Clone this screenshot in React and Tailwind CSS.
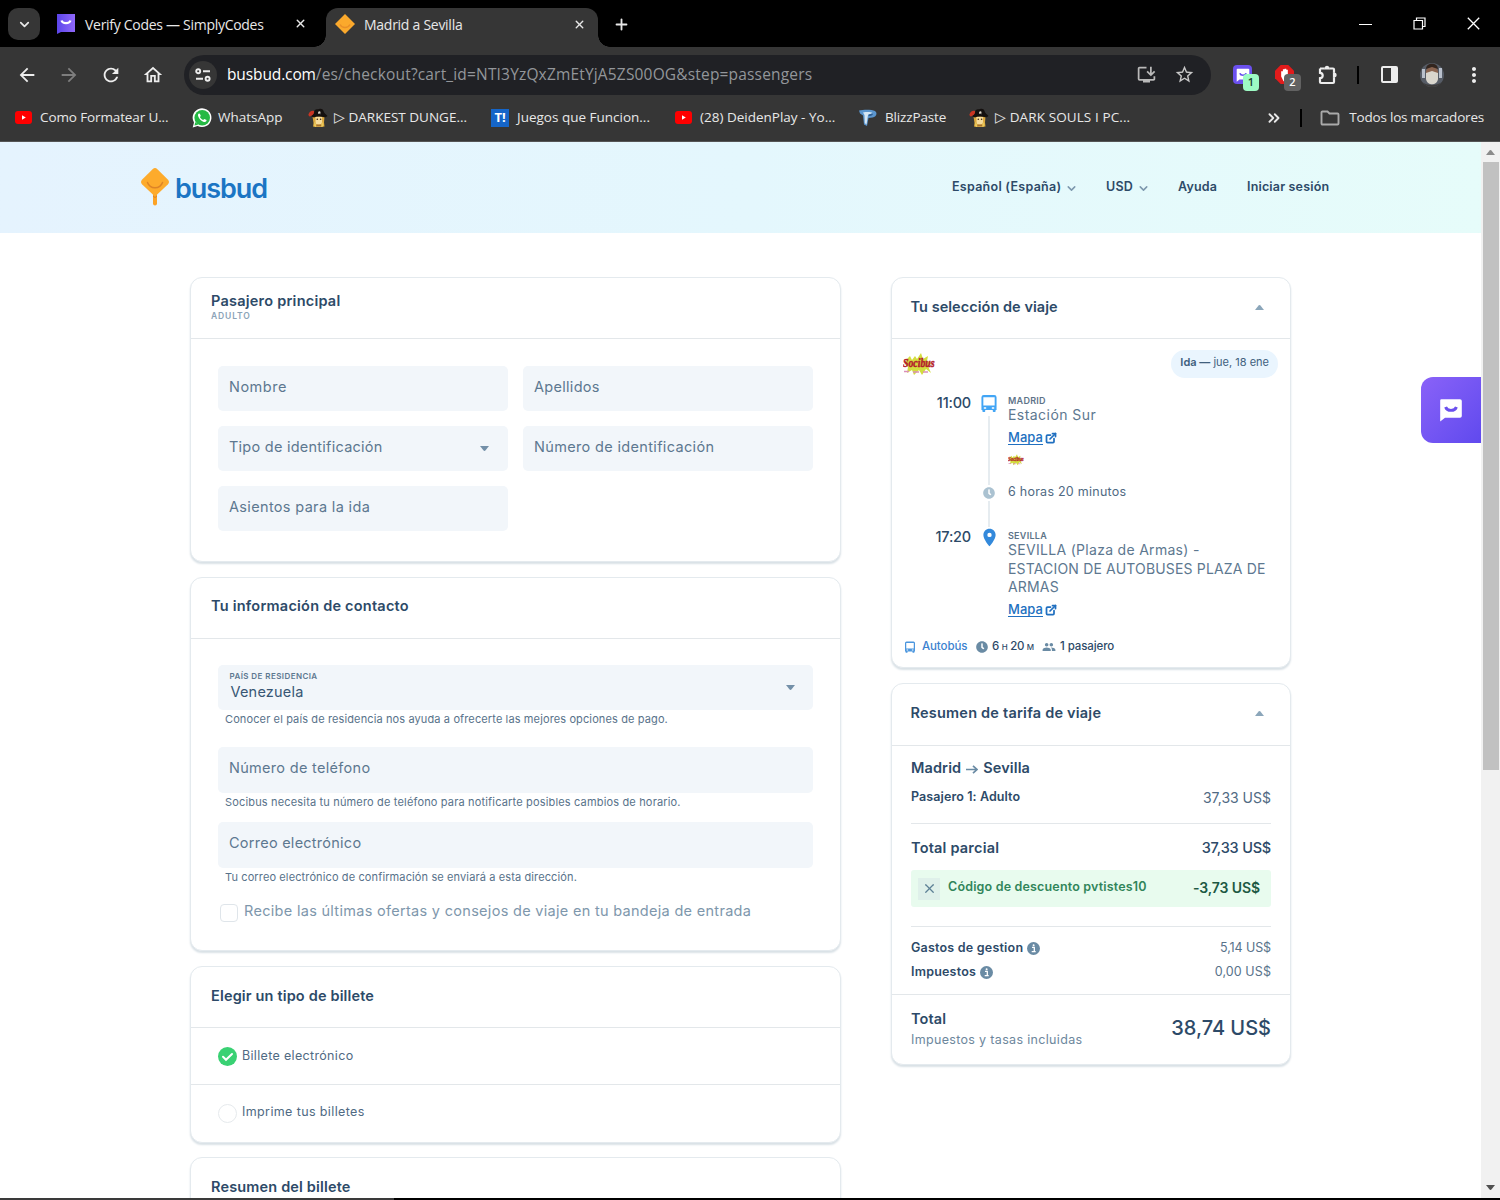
import React from 'react'
import {
  MdArrowBack,
  MdArrowForward,
  MdRefresh,
  MdOutlineHome,
  MdOutlineInstallDesktop,
  MdStarBorder,
  MdMoreVert,
  MdPeople,
  MdLocationOn,
} from 'react-icons/md'
import { FaClock } from 'react-icons/fa'
import { ChevronDown, ChevronsRight, ExternalLink, Plus, X } from 'lucide-react'

const CodesLogo = ({ className, bubble, smile }) => (
  <svg viewBox="0 0 20 20" className={className}>
    <path d="M2 1h15.500a1.500 1.500 0 0 1 1.500 1.500v12.500a1.500 1.500 0 0 1-1.500 1.500H5L1 19.500V2a1 1 0 0 1 1-1z" fill={bubble} />
    <path d="M5.500 7.500c1.200 3.800 7.800 3.800 9 0" fill="none" stroke={smile} strokeWidth="2.400" />
  </svg>
)

const YouTubeIcon = () => (
  <svg viewBox="0 0 17 13" className="h-[13px] w-[17px]">
    <rect width="17" height="13" rx="3" fill="#f00" />
    <path d="M7 4.200v4.600l3.800-2.300z" fill="#fff" />
  </svg>
)

const WhatsAppIcon = () => (
  <svg viewBox="0 0 20 20" className="size-5">
    <path d="M.7 19.500l1.300-4.900A9.400 9.400 0 1 1 5.600 18z" fill="#fff" />
    <circle cx="10.200" cy="9.800" r="7.800" fill="#25b944" />
    <path d="M2.400 17.600l1-3.600 2.800 2.700z" fill="#25b944" />
    <path d="M6.900 5.600c-.8.500-1.100 1.500-.8 2.500.9 2.800 3 4.900 5.700 5.900 1.200.4 2.400-.2 2.700-1.400l.1-.6-2.300-1.100-1.100 1.200c-1.500-.6-2.600-1.700-3.300-3.100l.9-1.100-.9-2.200z" fill="#fff" />
  </svg>
)

const PirateIcon = () => (
  <svg viewBox="0 0 20 20" className="size-5">
    <path d="M4.500 8.500h12l-.5 6 .5 4-3 .5H7l-2-.5.500-3.500z" fill="#dba73c" />
    <path d="M7.500 9h6.500v4.500a3.200 3.200 0 0 1-6.500 0z" fill="#f6dc9c" />
    <path d="M6.500 13.500l1.500 3 2.500.8 3-.8 1.500-3 .5 4-1.500 1.500H7.500L6 17.500z" fill="#e9c95c" />
    <path d="M8 18.500l.5-2h4.500l.5 2z" fill="#a8702a" />
    <path d="M3.500 8.500C4.500 6 6 5 6.500 2.500 8 .5 9.500 1.500 11 1c2-.8 4 0 4.500 2 .5 2.500 2.500 3 4 5-1.500 1.500-3 1.500-4.500 1C12 8 9 8 6 9.500z" fill="#14100f" />
    <path d="M.5 6.500C1 3.500 4 2 6 3c.5 1.500-.5 3-1.500 4L2 8.500.8 8z" fill="#c93523" />
    <path d="M10 4.200l2.600 1.600M12.600 4.200L10 5.800" stroke="#d8d4c8" strokeWidth=".7" />
    <circle cx="11.300" cy="4.200" r="1" fill="#d8d4c8" />
    <circle cx="9.300" cy="11.300" r=".8" fill="#3a2512" />
    <circle cx="12.600" cy="11.300" r=".8" fill="#3a2512" />
  </svg>
)

const JuegosIcon = () => (
  <span className="flex size-[18px] items-center justify-center bg-[#1565c8] text-[13px] font-bold text-white">T!</span>
)

const BlizzIcon = () => (
  <svg viewBox="0 0 18 18" className="size-[18px]">
    <path d="M0 1.500C5 .5 13 .5 16 2c3 2.500 1 6-2.500 6.500L9.500 9 8 17l-3-1.500L4 6.500 1 4.500z" fill="#5b96cf" />
    <path d="M4 3.500c4-.8 8-.5 9.500.4L9 6 7.500 15.500 5.800 14 5.500 6z" fill="#d5e7f5" />
    <path d="M9.500 5.500l4-1c1 1-.3 2.400-3.800 2.500z" fill="#2f5f93" />
  </svg>
)

const PuzzleIcon = () => (
  <svg viewBox="0 0 20 20" className="ml-6 size-5">
    <path d="M2 3.500h4.700M11.300 3.500H15a1 1 0 0 1 1 1v3.200M16 12.300v4.700a1 1 0 0 1-1 1H3a1 1 0 0 1-1-1v-3.800c3.600-.2 3.600-5.200 0-5.400V3.500" fill="none" stroke="currentColor" strokeWidth="2.200" />
    <path d="M6.800 4V3a2.200 2.200 0 0 1 4.400 0v1zM15.500 7.800h1a2.200 2.200 0 0 1 0 4.400h-1z" fill="currentColor" />
    <path d="M6.500 3.500h5M16 7.500v5" stroke="currentColor" strokeWidth="2.200" />
  </svg>
)

const BusbudMark = () => (
  <svg viewBox="0 0 28 38" className="mb-px h-[38px] w-7">
    <path d="M12 24h4v11.500a2 2 0 0 1-4 0z" fill="#fca326" />
    <path d="M11.600 1.200a3.400 3.400 0 0 1 4.800 0L26.800 11.600a3.400 3.400 0 0 1 0 4.800L14 28.500 1.200 16.400a3.400 3.400 0 0 1 0-4.800z" fill="#fdab2c" />
    <path d="M6.500 14.500c2.500 7 12.500 7 15 0" fill="none" stroke="#dd8427" strokeWidth="1.500" strokeLinecap="round" />
    <path d="M12 27.500l2 1.500 2-1.500v1.200l-2 1.300-2-1.300z" fill="#dd8427" />
  </svg>
)

const SocibusLogo = ({ className }) => (
  <svg viewBox="0 0 34 23" className={className}>
    <path d="M3 7l4-4 2 4 3-4 2 3 4-6 2 6 5-3-1 5 5 2-4 3 3 7-5-4-4 6-3-5-5 5-2-5-5 3 1-6-3-3z" fill="#d3dd3e" />
    <g transform="scale(1 1.250)">
      <text x="0" y="11.200" className="font-['Liberation_Serif',serif] text-[9.800px] font-bold italic" fill="#b3202c" stroke="#b3202c" strokeWidth=".4">Socibus</text>
    </g>
    <path d="M1 18.500h5M10 19h6M20 19h5" stroke="#d990b8" strokeWidth="1.500" />
  </svg>
)

const BusIcon = ({ className }) => (
  <svg viewBox="0 0 16 18" className={className} fill="currentColor">
    <path fillRule="evenodd" d="M2.500 0h11A2.500 2.500 0 0 1 16 2.500V16h-1v1.200a.8.8 0 0 1-.8.800h-1.400a.8.8 0 0 1-.8-.8V16H4v1.200a.8.8 0 0 1-.8.800H1.800a.8.8 0 0 1-.8-.8V16H0V2.500A2.500 2.500 0 0 1 2.500 0zM2 2.500v8.700h12V2.500zM2.500 13v1.500H5V13zM11 13v1.500h2.500V13z" />
  </svg>
)

const InfoIcon = () => (
  <svg viewBox="0 0 13 13" className="mt-px size-[13px]">
    <circle cx="6.500" cy="6.500" r="6.500" fill="#6a8ba4" />
    <path d="M5 5.300h2.300v4M4.700 9.600h4" fill="none" stroke="#fff" strokeWidth="1.300" />
    <circle cx="6.600" cy="3.200" r="1" fill="#fff" />
  </svg>
)

const Caret = ({ up = false, className = 'text-[#7490a8]' }) => (
  <svg viewBox="0 0 9 5" className={`h-[5px] w-[9px] ${className}`} fill="currentColor">
    {up ? <path d="M0 5L3.600.5a1.200 1.200 0 0 1 1.800 0L9 5z" /> : <path d="M0 0h9L5.400 4.500a1.200 1.200 0 0 1-1.800 0z" />}
  </svg>
)

const TabStrip = () => (
  <div className="flex h-[47px] shrink-0 bg-black text-[14px] text-[#e8e8e8]">
    <div className="mt-2 ml-2 flex size-8 items-center justify-center rounded-[10px] bg-[#363636]">
      <ChevronDown size={15} strokeWidth={2.800} />
    </div>
    <div className="flex w-[278px] items-center pl-4">
      <svg viewBox="0 0 20 20" className="size-5">
        <defs>
          <linearGradient id="codes" x1="0" x2="1">
            <stop offset="0" stopColor="#5b45ea" />
            <stop offset="1" stopColor="#9068fa" />
          </linearGradient>
        </defs>
        <path d="M1 0h18v18H5l-4 2z" fill="url(#codes)" />
        <path d="M5.500 6.500c1.200 3.600 7.800 3.600 9 0" fill="none" stroke="#fff" strokeWidth="2.300" />
      </svg>
      <span className="ml-[9px] w-[209px] pt-0.5 tracking-[-0.29px] whitespace-nowrap">Verify Codes — SimplyCodes</span>
      <X size={13} strokeWidth={2.600} />
    </div>
    <div className="relative mt-2 ml-2 flex w-[272px] items-center rounded-t-xl bg-[#363636] pr-3 pb-[7px] pl-[9px]">
      <span className="absolute bottom-0 -left-3 size-3 bg-[radial-gradient(circle_at_0_0,#000_11.500px,#363636_12px)]"></span>
      <span className="absolute -right-3 bottom-0 size-3 bg-[radial-gradient(circle_at_100%_0,#000_11.500px,#363636_12px)]"></span>
      <svg viewBox="0 0 20 20" className="size-5">
        <path d="M10 0l10 10-10 10L0 10z" fill="#fba92c" />
        <path d="M5 10.500c2 4 8 4 10 0" fill="none" stroke="#e98f27" strokeWidth="1.500" />
      </svg>
      <span className="ml-[9px] flex-1 tracking-[-0.27px]">Madrid a Sevilla</span>
      <X size={13} strokeWidth={2.600} />
    </div>
    <Plus size={17} strokeWidth={2.600} className="mt-4 ml-[15px]" />
    <div className="mt-[17px] mr-5 ml-auto flex gap-[41px] text-white">
      <svg viewBox="0 0 13 13" className="size-[13px]"><path d="M0 7.500h13" stroke="currentColor" strokeWidth="1" /></svg>
      <svg viewBox="0 0 13 13" className="size-[13px]" fill="none" stroke="currentColor" strokeWidth="1.200">
        <path d="M1 3.500h8.500V12H1zM3.500 3.500V1H12v8.500H9.500" />
      </svg>
      <svg viewBox="0 0 13 13" className="size-[13px]"><path d="M.8.8l11.400 11.400M12.200.8L.8 12.200" stroke="currentColor" strokeWidth="1.300" /></svg>
    </div>
  </div>
)

const Toolbar = () => (
  <div className="flex h-[54px] shrink-0 items-center pt-px pl-4 text-[#ededed]">
    <div className="flex w-[168px] gap-5">
      <MdArrowBack size={22} />
      <MdArrowForward size={22} className="text-[#7e7e7e]" />
      <MdRefresh size={22} />
      <MdOutlineHome size={22} />
    </div>
    <div className="flex h-10 w-[1027px] items-center rounded-full bg-[#202125] pr-4 pl-[5px]">
      <span className="flex size-7 items-center justify-center rounded-full bg-[#363636]">
        <svg viewBox="0 0 16 14" className="h-3.5 w-4" fill="none" stroke="currentColor" strokeWidth="1.900">
          <circle cx="3.200" cy="3.200" r="2" />
          <path d="M8 3.200h7M1 10.800h7" />
          <circle cx="12.600" cy="10.800" r="2" />
        </svg>
      </span>
      <span className="ml-[10px] flex-1 pt-px text-[15.500px] text-[#93969a]">
        <span className="tracking-[-0.12px] text-white">busbud.com</span>
        <span className="tracking-[0.17px]">/es/checkout?cart_id=NTI3YzQxZmEtYjA5ZS00OG&amp;step=passengers</span>
      </span>
      <MdOutlineInstallDesktop size={21} className="mr-[17px] text-[#b9b9b9]" />
      <MdStarBorder size={21} className="text-[#c8c8c8]" />
    </div>
    <div className="relative ml-[22px] size-[19px] rounded bg-[#6b50ee] p-[3px]">
      <CodesLogo className="size-[14px]" bubble="#fff" smile="#6b50ee" />
      <span className="absolute top-[9px] left-[10px] flex h-[17px] w-4 items-center justify-center rounded bg-[#9dfac4] text-[11px] font-semibold text-[#20402e]">1</span>
    </div>
    <div className="relative ml-[23px] size-[19px]">
      <svg viewBox="0 0 20 20" className="size-[19px]">
        <path d="M6 0h8l6 6v8l-6 6H6l-6-6V6z" fill="#e21b1b" />
        <path d="M6.500 12V6.500h1.800V4.500h1.800V4h1.800v1h1.600v8l-2 4H9z" fill="#fff" />
      </svg>
      <span className="absolute top-[9px] left-[9px] flex h-[17px] w-[17px] items-center justify-center rounded bg-[#626262] text-[11px] font-semibold text-white">2</span>
    </div>
    <PuzzleIcon />
    <span className="ml-[19px] h-[18px] w-[2px] bg-black"></span>
    <svg viewBox="0 0 17 17" className="ml-[22px] size-[17px]">
      <rect x="1" y="1" width="15" height="15" rx="1" fill="none" stroke="currentColor" strokeWidth="2" />
      <path d="M10 1h6v15h-6z" fill="currentColor" />
    </svg>
    <svg viewBox="0 0 24 24" className="ml-[22px] size-6">
      <clipPath id="avatar"><circle cx="12" cy="12" r="12" /></clipPath>
      <g clipPath="url(#avatar)">
        <path d="M0 0h24v24H0z" fill="#565c66" />
        <path d="M2 6h3v9H2zM19 5h3v10h-3z" fill="#b9c0cc" />
        <path d="M6 9C6 2 18 2 18 9v8H6z" fill="#8a6450" />
        <path d="M6 6C6-1 18-1 18 6l-6-2z" fill="#33261f" />
        <path d="M6 10l6-2 6 2v6c-1 7-11 7-12 0z" fill="#d9d6cd" />
        <path d="M2 19c5 4 15 4 20 0v5H2z" fill="#3d3b3a" />
        <path d="M7 17c1 5 9 5 10 0z" fill="#d9d6cd" />
      </g>
    </svg>
    <MdMoreVert size={24} className="ml-[18px]" />
  </div>
)

const bookmarks = [
  { label: 'Como Formatear U...', icon: <YouTubeIcon />, box: 'w-[177px] gap-2 tracking-[-0.12px]' },
  { label: 'WhatsApp', icon: <WhatsAppIcon />, box: 'w-[116px] gap-1.5' },
  { label: '▷ DARKEST DUNGE...', icon: <PirateIcon />, box: 'w-[183px] gap-1.5' },
  { label: 'Juegos que Funcion...', icon: <JuegosIcon />, box: 'w-[184px] gap-2' },
  { label: '(28) DeidenPlay - Yo...', icon: <YouTubeIcon />, box: 'w-[184px] gap-2' },
  { label: 'BlizzPaste', icon: <BlizzIcon />, box: 'w-[110px] gap-2 tracking-[-0.15px]' },
  { label: '▷ DARK SOULS I PC...', icon: <PirateIcon />, box: 'w-[180px] gap-1.5 tracking-[0.1px]' },
]

const BookmarksBar = () => (
  <div className="flex h-[41px] shrink-0 items-center border-b border-[#555] pr-4 pb-[7px] pl-[15px] text-[13.500px] whitespace-nowrap text-[#e8e8e8]">
    {bookmarks.map((item) => (
      <div key={item.label} className={`flex shrink-0 items-center ${item.box}`}>
        {item.icon}
        <span>{item.label}</span>
      </div>
    ))}
    <ChevronsRight size={18} strokeWidth={2.500} className="ml-[116px]" />
    <span className="ml-[17px] h-[18px] w-[2px] bg-black"></span>
    <svg viewBox="0 0 20 16" className="mr-[9px] ml-auto h-4 w-5 shrink-0" fill="none" stroke="#aaa" strokeWidth="1.900">
      <path d="M1.500 2.500a1 1 0 0 1 1-1h5l2 2h8a1 1 0 0 1 1 1v9a1 1 0 0 1-1 1h-15a1 1 0 0 1-1-1z" />
    </svg>
    <span className="tracking-[-0.2px]">Todos los marcadores</span>
  </div>
)

const SiteHeader = () => (
  <header className="flex h-[91px] shrink-0 items-center bg-linear-to-r from-[#e5f3fe] via-[#e4f7fd] to-[#e6fcfa] pr-[151px] pl-[141px] text-[12.500px] font-semibold text-[#2d4a68]">
    <BusbudMark />
    <span className="mt-[3px] ml-[6px] text-[27px] font-semibold tracking-[-0.04em] text-[#1b75c4]">busbud</span>
    <nav className="ml-auto flex items-center">
      <span className="flex w-[154px] items-center gap-1 tracking-[0.27px]">Español (España) <ChevronDown size={13} strokeWidth={2.800} className="mt-0.5 text-[#7d98ae]" /></span>
      <span className="flex w-[72px] items-center gap-1 tracking-[0.2px]">USD <ChevronDown size={13} strokeWidth={2.800} className="mt-0.5 text-[#7d98ae]" /></span>
      <span className="w-[69px] tracking-[0.2px]">Ayuda</span>
      <span className="w-[83px] tracking-[0.17px] whitespace-nowrap">Iniciar sesión</span>
    </nav>
  </header>
)

const Card = ({ className = '', children }) => (
  <section className={`shrink-0 rounded-xl border border-[#e4eaee] bg-white shadow-[0_2px_2px_#d9e1e6] ${className}`}>{children}</section>
)

const CardTitle = ({ children, caret = false, className = 'h-[61px] pb-[3px] pl-5 tracking-[0.16px]' }) => (
  <div className={`flex items-center justify-between border-b border-[#e3e7ea] pr-[26px] text-[14.500px] font-semibold text-[#2d4a68] ${className}`}>
    <h2>{children}</h2>
    {caret && <Caret up className="mt-px text-[#8ba6ba]" />}
  </div>
)

const Field = ({ label, caret = false, className = 'h-[45px] pb-[3px] tracking-[0.3px]' }) => (
  <div className={`flex items-center justify-between rounded-[5px] bg-[#f2f6fa] pr-[19px] pl-[11px] text-[14.500px] text-[#5d7890] ${className}`}>
    <span>{label}</span>
    {caret && <Caret className="mt-[3px] text-[#7490a8]" />}
  </div>
)

const PassengerCard = () => (
  <Card className="h-[285px]">
    <div className="h-[61px] border-b border-[#e3e7ea] pt-3 pl-5">
      <h2 className="text-[14.500px] leading-[21px] font-semibold tracking-[0.23px] text-[#2d4a68]">Pasajero principal</h2>
      <p className="pt-px text-[8.500px] leading-[9px] font-semibold tracking-[0.1em] text-[#8ba3b7]">ADULTO</p>
    </div>
    <div className="grid grid-cols-2 gap-[15px] px-[27px] pt-[27px]">
      <Field label="Nombre" className="h-[45px] pb-[3px] tracking-[0.5px]" />
      <Field label="Apellidos" />
      <Field label="Tipo de identificación" caret className="h-[45px] pb-[3px] tracking-[0.25px]" />
      <Field label="Número de identificación" className="h-[45px] pb-[3px] tracking-[0.34px]" />
      <Field label="Asientos para la ida" className="h-[45px] pb-1 tracking-[0.34px]" />
    </div>
  </Card>
)

const Hint = ({ className = 'tracking-[0.12px]', children }) => (
  <p className={`h-5 pl-[7px] text-[11px] leading-[19px] whitespace-nowrap text-[#58728a] ${className}`}>{children}</p>
)

const ContactCard = () => (
  <Card className="mt-[15px] h-[374px]">
    <CardTitle className="h-[61px] pb-[5px] pl-5 tracking-[0.23px]">Tu información de contacto</CardTitle>
    <div className="px-[27px] pt-[26px]">
      <div className="flex h-[45px] items-center justify-between rounded-[5px] bg-[#f2f6fa] pr-[18px] pb-px pl-[11.500px]">
        <div>
          <p className="text-[8px] leading-[10px] font-semibold tracking-[0.42px] text-[#5d7890]">PAÍS DE RESIDENCIA</p>
          <p className="pl-px text-[14.500px] leading-[22px] tracking-[0.2px] text-[#385674]">Venezuela</p>
        </div>
        <Caret />
      </div>
      <Hint>Conocer el país de residencia nos ayuda a ofrecerte las mejores opciones de pago.</Hint>
      <Field label="Número de teléfono" className="mt-[17px] h-[46px] pb-[5px] tracking-[0.3px]" />
      <Hint className="tracking-[0.165px]">Socibus necesita tu número de teléfono para notificarte posibles cambios de horario.</Hint>
      <Field label="Correo electrónico" className="mt-[9px] h-[46px] pb-[5px] tracking-[0.25px]" />
      <Hint>Tu correo electrónico de confirmación se enviará a esta dirección.</Hint>
      <div className="mt-3 flex items-center pl-[2px] text-[14.500px] text-[#7e97ac]">
        <span className="mt-1 mr-[6px] size-[18px] rounded-[4px] border border-[#dfe5ea]"></span>
        <span className="tracking-[0.3px] whitespace-nowrap">Recibe las últimas ofertas y consejos de viaje en tu bandeja de entrada</span>
      </div>
    </div>
  </Card>
)

const TicketTypeCard = () => (
  <Card className="mt-[15px] h-[177px] text-[12.500px] tracking-[0.33px] text-[#506a83]">
    <CardTitle>Elegir un tipo de billete</CardTitle>
    <div className="flex h-[57px] items-center border-b border-[#e3e7ea] pl-[27px]">
      <svg viewBox="0 0 19 19" className="mr-[5px] size-[19px]">
        <circle cx="9.500" cy="9.500" r="9.500" fill="#39d173" />
        <path d="M5 9.800l3 3 6-5.800" fill="none" stroke="#fff" strokeWidth="2" strokeLinecap="round" />
      </svg>
      <span>Billete electrónico</span>
    </div>
    <div className="flex h-[57px] items-center pl-[27px]">
      <span className="mr-[5px] size-[19px] rounded-full border border-[#e6eaed]"></span>
      <span className="pb-[3px] tracking-[0.38px]">Imprime tus billetes</span>
    </div>
  </Card>
)

const MapLink = () => (
  <a className="flex h-[22px] w-fit items-center gap-[2px] text-[13px] font-medium text-[#2170c0]">
    <span className="tracking-[0.05px] underline underline-offset-2">Mapa</span>
    <ExternalLink size={12} strokeWidth={3.500} />
  </a>
)

const TripCard = () => (
  <Card className="h-[391px]">
    <CardTitle caret className="h-[61px] pb-0.5 pl-[18.500px] tracking-[0.04px]">Tu selección de viaje</CardTitle>
    <div className="flex h-[54px] justify-between pt-[11px] pr-3 pl-[11px]">
      <SocibusLogo className="mt-[3px] h-[23px] w-[34px]" />
      <p className="h-7 rounded-full bg-[#eaf5fe] px-[9px] text-[11px] leading-6 text-[#40607d]">
        <span className="font-semibold">Ida —</span> jue, 18 ene
      </p>
    </div>

    <div className="flex h-[86px]">
      <p className="-mt-px w-[79px] text-right text-[14.500px] font-medium tracking-[-0.2px] text-[#2d4a68]">11:00</p>
      <div className="flex w-[36px] flex-col items-center">
        <BusIcon className="mt-0.5 h-[17px] w-4 text-[#42a5f5]" />
        <span className="mt-1 w-0.5 flex-1 bg-[#e6ecf0]"></span>
      </div>
      <div className="pl-px">
        <p className="pt-0.5 text-[9px] leading-[11px] font-semibold tracking-[0.03em] text-[#5d7388]">MADRID</p>
        <p className="text-[14px] leading-[18px] tracking-[0.45px] text-[#5d7890]">Estación Sur</p>
        <div className="pt-[3px]"><MapLink /></div>
        <SocibusLogo className="mt-[5px] h-[12px] w-[17px]" />
      </div>
    </div>
    <div className="flex h-[26px] items-center">
      <div className="mr-px ml-[79px] flex h-full w-[36px] flex-col items-center">
        <span className="h-1.5 w-0.5 bg-[#e6ecf0]"></span>
        <FaClock size={12} className="my-0.5 shrink-0 text-[#abc2d1]" />
        <span className="w-0.5 flex-1 bg-[#e6ecf0]"></span>
      </div>
      <p className="text-[12.500px] tracking-[0.25px] text-[#506a83]">6 horas 20 minutos</p>
    </div>
    <div className="flex h-[129px]">
      <p className="w-[79px] pt-[21px] text-right text-[14.500px] font-medium tracking-[-0.2px] text-[#2d4a68]">17:20</p>
      <div className="mr-px flex w-[36px] flex-col items-center">
        <span className="h-[22px] w-0.5 bg-[#e6ecf0]"></span>
        <MdLocationOn size={21} className="text-[#3389db]" />
      </div>
      <div className="w-[265px] pt-[25px]">
        <p className="text-[9px] leading-[11px] font-semibold tracking-[0.03em] text-[#5d7388]">SEVILLA</p>
        <p className="mb-0.5 text-[14px] leading-[18.700px] tracking-[0.17px] text-[#5d7890]"><span className="tracking-[0.3px]">SEVILLA (Plaza de Armas) -</span><br />ESTACION DE AUTOBUSES PLAZA DE ARMAS</p>
        <MapLink />
      </div>
    </div>

    <div className="flex h-[25px] items-center pt-px pl-[13px] text-[11.500px] font-medium text-[#2d4a68]">
      <BusIcon className="mr-[7px] h-[12px] w-2.5 text-[#4b96de]" />
      <span className="w-[54px] tracking-[-0.1px] text-[#3b82cf]">Autobús</span>
      <FaClock size={12} className="mr-1 text-[#6a8ba4]" />
      <span className="w-[50px] tracking-[-0.3px] whitespace-nowrap">6 <span className="text-[8px]">H</span> 20 <span className="text-[8px]">M</span></span>
      <MdPeople size={14} className="mr-1 text-[#6a8ba4]" />
      <span className="tracking-[-0.1px]">1 pasajero</span>
    </div>
  </Card>
)

const FareCard = () => (
  <Card className="mt-[15px] h-[382px] text-[#2d4a68]">
    <CardTitle caret className="h-[62px] pb-[3px] pl-[18.500px] tracking-[0.22px]">Resumen de tarifa de viaje</CardTitle>
    <div className="px-[19px] pt-[10px] font-semibold">
      <p className="flex h-6 items-center text-[14.500px] tracking-[0.12px]">
        Madrid
        <svg viewBox="0 0 12 9" className="mx-[5px] mt-0.5 h-[9px] w-3" fill="none" stroke="#6a8ba4" strokeWidth="1.700">
          <path d="M0 4.500h11M7 .8l4 3.700-4 3.700" />
        </svg>
        Sevilla
      </p>
      <div className="flex h-[44px] justify-between border-b border-[#e3e7ea] pt-2 text-[12.500px]">
        <span className="tracking-[0.1px]">Pasajero 1: Adulto</span>
        <span className="text-[14px] leading-5 font-normal text-[#506a83]">37,33 US$</span>
      </div>
      <div className="flex h-[46px] items-center justify-between pt-px text-[14.500px]">
        <span className="tracking-[0.2px]">Total parcial</span>
        <span className="font-medium tracking-[-0.2px]">37,33 US$</span>
      </div>
      <div className="flex h-[37px] items-center rounded-[3px] bg-[#e8fbee] pr-[11px] pl-[7px]">
        <span className="mr-2 flex size-[22px] items-center justify-center bg-[#dff0ea]"><X size={15} className="text-[#5d8095]" /></span>
        <span className="flex-1 pb-0.5 text-[12.500px] tracking-[0.17px] text-[#31855a]">Código de descuento pvtistes10</span>
        <span className="pb-0.5 text-[14px] tracking-[-0.1px] text-[#1d5943]">-3,73 US$</span>
      </div>
      <div className="mt-[19px] border-t border-[#e3e7ea] pt-[9px] text-[12.500px] tracking-[0.21px]">
        <p className="flex h-6 items-center gap-1">Gastos de gestion <InfoIcon /><span className="ml-auto font-normal tracking-[-0.1px] text-[#58728a]">5,14 US$</span></p>
        <p className="flex h-6 items-center gap-1">Impuestos <InfoIcon /><span className="ml-auto font-normal tracking-[0.1px] text-[#58728a]">0,00 US$</span></p>
      </div>
    </div>
    <div className="mt-[10px] flex justify-between border-t border-[#e3e7ea] px-[19px] pt-[13px]">
      <div>
        <p className="text-[14.500px] leading-[22px] font-semibold tracking-[0.1px]">Total</p>
        <p className="text-[12.500px] leading-5 tracking-[0.33px] text-[#6d879d]">Impuestos y tasas incluidas</p>
      </div>
      <p className="text-[20px] leading-[41px] font-medium">38,74 US$</p>
    </div>
  </Card>
)

const App = () => {
  return (
    <div className="flex h-[1200px] w-[1500px] flex-col overflow-hidden bg-[#363636] font-['Open_Sans',sans-serif]">
      <TabStrip />
      <Toolbar />
      <BookmarksBar />

      <div className="relative flex h-[1056px] shrink-0 bg-white font-['Inter',sans-serif]">
        <div className="flex w-[1481px] flex-col overflow-hidden">
          <SiteHeader />
          <main className="flex min-h-0 flex-1 gap-[50px] overflow-hidden pt-[44px] pl-[190px]">
            <div className="flex w-[651px] flex-col">
              <PassengerCard />
              <ContactCard />
              <TicketTypeCard />
              <Card className="mt-[14px] h-[100px]">
                <CardTitle>Resumen del billete</CardTitle>
              </Card>
            </div>
            <div className="w-[400px]">
              <TripCard />
              <FareCard />
            </div>
          </main>
        </div>
        <div className="flex w-[19px] flex-col items-center bg-[#f1f1f1] pt-2">
          <Caret up className="text-[#8b8b8b]" />
          <div className="mt-[7px] h-[608px] w-4 bg-[#c1c1c1]"></div>
          <Caret className="mt-auto mb-2 text-[#505050]" />
        </div>
        <div className="absolute top-[235px] right-[19px] flex h-[66px] w-[60px] items-center justify-center rounded-l-xl bg-linear-to-br from-[#8a62f8] to-[#6049ee]">
          <CodesLogo className="size-6" bubble="#fff" smile="#6b50ee" />
        </div>
      </div>
      <div className="flex h-0.5 shrink-0 bg-black">
        <div className="w-[394px] bg-[#3a3a3a]"></div>
      </div>
    </div>
  )
}

export default App
